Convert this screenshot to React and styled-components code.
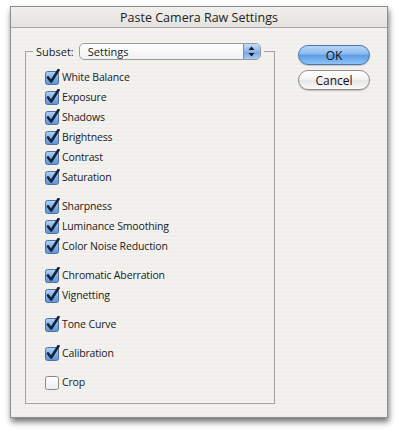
import React from "react";
import styled, { createGlobalStyle } from "styled-components";

const Global = createGlobalStyle`
  html, body {
    margin: 0;
    background: #ffffff;
  }
  body {
    font-family: "Open Sans", "DejaVu Sans", sans-serif;
    color: #1a1a1a;
  }
`;

const Page = styled.div`
  width: 400px;
  height: 433px;
  padding: 6px 0 0 10px;
  box-sizing: border-box;
`;

const Window = styled.div`
  width: 378px;
  height: 412px;
  box-sizing: border-box;
  border: 1px solid #8e8e8e;
  background: repeating-linear-gradient(
    to bottom,
    #efeeeb 0px,
    #efeeeb 2px,
    #f3f2ef 2px,
    #f3f2ef 4px
  );
  box-shadow: 1px 4px 6px rgba(0, 0, 0, 0.55);
`;

const TitleBar = styled.div`
  height: 20px;
  border-bottom: 1px solid #a8a8a8;
  background: linear-gradient(to bottom, #f0efec, #e4e3e0);
  display: flex;
  align-items: center;
  justify-content: center;
  font-size: 12.5px;
  color: #222;
`;

const Body = styled.div`
  display: flex;
  align-items: flex-start;
  gap: 23px;
  padding: 15px 0 0 14px;
`;

const Group = styled.fieldset`
  margin: 0;
  min-width: 0;
  width: 250px;
  box-sizing: border-box;
  padding: 0 0 11px 0;
  border: 1px solid #a4a4a4;
`;

const Legend = styled.legend`
  display: flex;
  align-items: center;
  gap: 5px;
  padding: 0 3px;
  margin-left: 7px;
  font-size: 11px;
`;

const Popup = styled.div`
  width: 182px;
  height: 17px;
  box-sizing: border-box;
  display: flex;
  border: 1px solid #9a9a9a;
  border-radius: 5px;
  background: linear-gradient(to bottom, #ffffff, #f1f1f1);
  overflow: hidden;
`;

const PopupText = styled.span`
  flex: 1;
  padding-left: 8px;
  line-height: 15px;
  font-size: 11px;
`;

const PopupArrows = styled.span`
  width: 16px;
  display: flex;
  align-items: center;
  justify-content: center;
  border-left: 1px solid #6f92c2;
  background: linear-gradient(to bottom, #c3dcf6 0%, #8db8ea 50%, #6ea3e2 51%, #a9cdf5 100%);
`;

const List = styled.div`
  display: flex;
  flex-direction: column;
  padding: 7px 0 0 19px;
`;

const Row = styled.label`
  display: flex;
  align-items: center;
  gap: 1px;
  height: 20px;
  margin-top: ${(p) => (p.$gap ? "9px" : "0")};
  font-size: 10.5px;
  letter-spacing: -0.15px;
`;

const Buttons = styled.div`
  display: flex;
  flex-direction: column;
  gap: 5px;
  margin-top: 2px;
`;

const Button = styled.button`
  width: 72px;
  height: 20px;
  padding: 0;
  border-radius: 10px;
  font-family: "Open Sans", "DejaVu Sans", sans-serif;
  font-size: 12px;
  color: #111;
  border: 1px solid ${(p) => (p.$primary ? "#4a74ad" : "#8c8c8c")};
  background: ${(p) =>
    p.$primary
      ? "linear-gradient(to bottom, #b9d7f7 0%, #88b9ef 45%, #5c9be6 52%, #8ec3f6 100%)"
      : "linear-gradient(to bottom, #ffffff 0%, #f4f4f4 45%, #e6e6e6 52%, #fafafa 100%)"};
  box-shadow: 0 1px 1px rgba(0, 0, 0, 0.2);
`;

const Check = ({ on }) => (
  <svg width="16" height="16" viewBox="0 0 16 16">
    <defs>
      <linearGradient id="cbon" x1="0" y1="0" x2="0" y2="1">
        <stop offset="0" stopColor="#b5d4f4" />
        <stop offset="0.5" stopColor="#7fb0e8" />
        <stop offset="1" stopColor="#5b94db" />
      </linearGradient>
      <linearGradient id="cboff" x1="0" y1="0" x2="0" y2="1">
        <stop offset="0" stopColor="#ffffff" />
        <stop offset="1" stopColor="#ececec" />
      </linearGradient>
    </defs>
    <rect
      x="0.5"
      y="2.5"
      width="13"
      height="13"
      rx="2"
      fill={on ? "url(#cbon)" : "url(#cboff)"}
      stroke={on ? "#4f719c" : "#8a8a8a"}
    />
    {on && (
      <path
        d="M3 8.5 L6.2 12.5 L13.5 1"
        fill="none"
        stroke="#14223a"
        strokeWidth="2.6"
        strokeLinecap="round"
        strokeLinejoin="round"
      />
    )}
  </svg>
);

const items = [
  ["White Balance", true, false],
  ["Exposure", true, false],
  ["Shadows", true, false],
  ["Brightness", true, false],
  ["Contrast", true, false],
  ["Saturation", true, false],
  ["Sharpness", true, true],
  ["Luminance Smoothing", true, false],
  ["Color Noise Reduction", true, false],
  ["Chromatic Aberration", true, true],
  ["Vignetting", true, false],
  ["Tone Curve", true, true],
  ["Calibration", true, true],
  ["Crop", false, true],
];

export default function App() {
  return (
    <Page>
      <Global />
      <Window>
        <TitleBar>Paste Camera Raw Settings</TitleBar>
        <Body>
          <Group>
            <Legend>
              Subset:
              <Popup>
                <PopupText>Settings</PopupText>
                <PopupArrows>
                  <svg width="7" height="11" viewBox="0 0 7 11">
                    <path d="M3.5 0.5 L6.5 4 L0.5 4 Z" fill="#1a1a1a" />
                    <path d="M3.5 10.5 L6.5 7 L0.5 7 Z" fill="#1a1a1a" />
                  </svg>
                </PopupArrows>
              </Popup>
            </Legend>
            <List>
              {items.map(([name, on, gap]) => (
                <Row key={name} $gap={gap}>
                  <Check on={on} />
                  {name}
                </Row>
              ))}
            </List>
          </Group>
          <Buttons>
            <Button $primary>OK</Button>
            <Button>Cancel</Button>
          </Buttons>
        </Body>
      </Window>
    </Page>
  );
}
